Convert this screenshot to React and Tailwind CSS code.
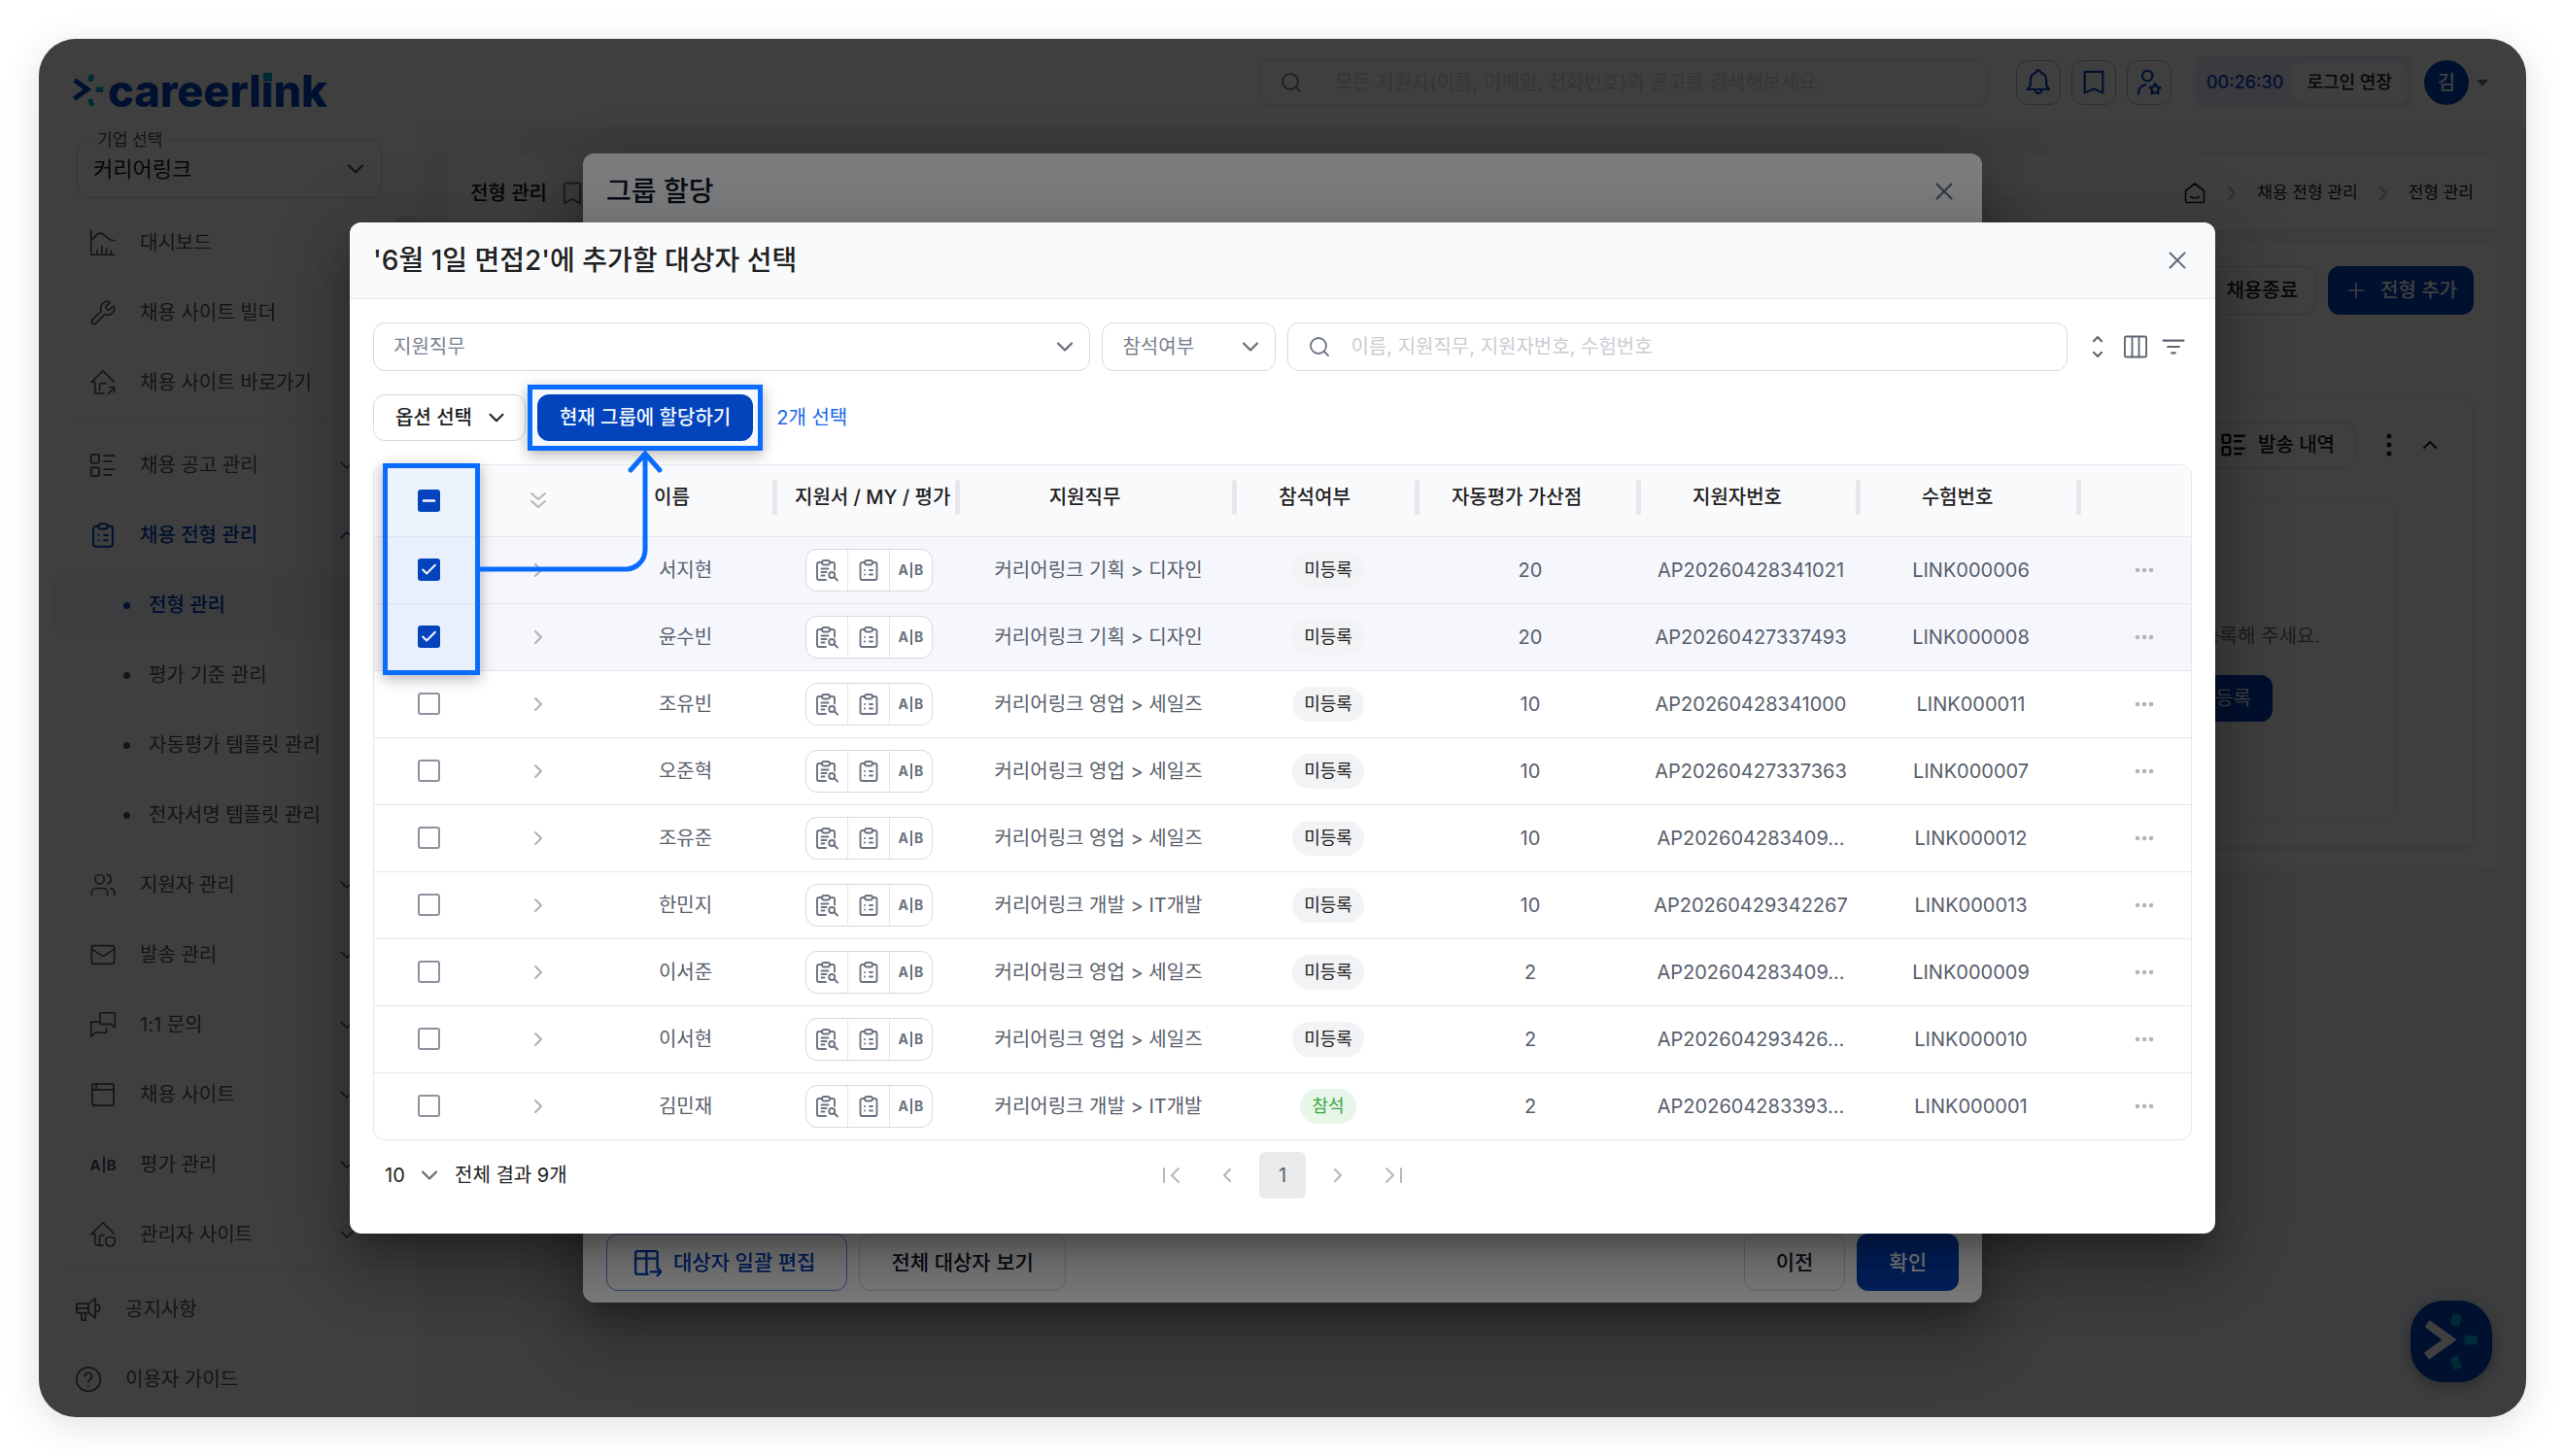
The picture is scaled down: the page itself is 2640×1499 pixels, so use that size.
import { useState } from "react";
import { Bookmark, ChevronDown, ChevronRight, ChevronUp, ChevronLeft, Mail, Minus, Check, Plus, Search, Users, Wrench, X } from "lucide-react";
import clsx from "clsx";

const applicants = [
  { id: 1, name: "서지현", job: "커리어링크 기획 > 디자인", attend: "미등록", score: 20, no: "AP20260428341021", exam: "LINK000006" },
  { id: 2, name: "윤수빈", job: "커리어링크 기획 > 디자인", attend: "미등록", score: 20, no: "AP20260427337493", exam: "LINK000008" },
  { id: 3, name: "조유빈", job: "커리어링크 영업 > 세일즈", attend: "미등록", score: 10, no: "AP20260428341000", exam: "LINK000011" },
  { id: 4, name: "오준혁", job: "커리어링크 영업 > 세일즈", attend: "미등록", score: 10, no: "AP20260427337363", exam: "LINK000007" },
  { id: 5, name: "조유준", job: "커리어링크 영업 > 세일즈", attend: "미등록", score: 10, no: "AP202604283409...", exam: "LINK000012" },
  { id: 6, name: "한민지", job: "커리어링크 개발 > IT개발", attend: "미등록", score: 10, no: "AP20260429342267", exam: "LINK000013" },
  { id: 7, name: "이서준", job: "커리어링크 영업 > 세일즈", attend: "미등록", score: 2, no: "AP202604283409...", exam: "LINK000009" },
  { id: 8, name: "이서현", job: "커리어링크 영업 > 세일즈", attend: "미등록", score: 2, no: "AP202604293426...", exam: "LINK000010" },
  { id: 9, name: "김민재", job: "커리어링크 개발 > IT개발", attend: "참석", score: 2, no: "AP202604283393...", exam: "LINK000001" },
];

const headers = ["이름", "지원서 / MY / 평가", "지원직무", "참석여부", "자동평가 가산점", "지원자번호", "수험번호"];

// small stroke icon on a 24px grid
const Icon = ({ size = 28, width = 1.6, className, children }) => (
  <svg
    width={size}
    height={size}
    viewBox="0 0 24 24"
    fill="none"
    stroke="currentColor"
    strokeWidth={width}
    strokeLinecap="round"
    strokeLinejoin="round"
    className={clsx("shrink-0", className)}
    aria-hidden="true"
  >
    {children}
  </svg>
);

const DashboardIcon = () => (
  <Icon width={1.4}>
    <path d="M1.5 1v21.500h20.500M2 9c3 0 3-5.500 7.500-5.500S15 10 22 10M7 22v-4M11 22v-7M15 22v-5M19 22v-3" />
  </Icon>
);
const HomeLinkIcon = () => (
  <Icon width={1.4}>
    <path d="M5 21.500V11.500H1.800L12 1.500l9.500 9.500M5 18.500c0 2 1 3 3 3h5M9 19v-4.500c0-1 .5-2 2-2h3.500M16.500 22l5.500-5.500M17.500 16h4.500v4.500" />
  </Icon>
);
const HomeShieldIcon = () => (
  <Icon width={1.4}>
    <path d="M5 18V11.500H1.800L12 1.500l9.500 9.500M5 18.500c0 2 1 3 3 3h4M9 21v-6.500c0-1 .5-2 2-2h2M18.500 14l4 1.500v3c0 2-2 3.500-4 4.300-2-.8-4-2.300-4-4.300v-3z" />
  </Icon>
);
const ListIcon = ({ size = 28, width = 1.6 }) => (
  <Icon size={size} width={width}>
    <rect x="1.500" y="2.500" width="7" height="7.500" rx="1" />
    <rect x="1.500" y="14" width="7" height="7.500" rx="1" />
    <path d="M13 3.500h9M13 8.500h6M13 15.500h9M13 20.500h6" />
  </Icon>
);
const ClipboardIcon = ({ size = 28, width = 1.7 }) => (
  <Icon size={size} width={width}>
    <path d="M8 4H5.500a2 2 0 0 0-2 2v14a2 2 0 0 0 2 2h13a2 2 0 0 0 2-2V6a2 2 0 0 0-2-2H16" />
    <rect x="8" y="2" width="8" height="4.500" rx="2.200" />
    <path d="M8 12h.1M8 16.500h.1M13 12h3M13 16.500h3" />
  </Icon>
);
const ClipboardSearchIcon = () => (
  <Icon size={24} width={1.9}>
    <path d="M6.500 4H4a2 2 0 0 0-2 2v14a2 2 0 0 0 2 2h7M15.500 4H18a2 2 0 0 1 2 2v5.500" />
    <rect x="7" y="2" width="8" height="4.500" rx="2.200" />
    <path d="M6.500 10.500h7M6.500 14h5M6.500 17.500h3M20 19.500l3 3" />
    <circle cx="17.200" cy="17" r="3" />
  </Icon>
);
const ChatIcon = () => (
  <Icon width={1.4}>
    <path d="M9.500 1.500h13v13l-3.500-3H9.500zM9.500 9.500h-4.500l-3.500 0v13l4-3.500h9.500v-4" />
  </Icon>
);
const WindowIcon = () => (
  <Icon width={1.5}>
    <rect x="2.500" y="2.500" width="19" height="19" rx="2" />
    <path d="M2.500 7.500h19M6 2.500v4.500" />
  </Icon>
);
const MegaphoneIcon = () => (
  <Icon width={1.5}>
    <path d="M3 7h9l6-4.500v17L12 15H3a1.500 1.500 0 0 1-1.500-1.500v-5A1.500 1.500 0 0 1 3 7zM12 7v8M6 15v6.500h3.500V15M18 8h2c1 0 2 1 2 3s-1 3-2 3h-2M1.500 11H12" />
  </Icon>
);
const HelpIcon = () => (
  <Icon width={1.5}>
    <circle cx="12" cy="12" r="10.500" />
    <path d="M9 9.300a3 3 0 1 1 4.400 2.700c-1 .6-1.400 1-1.400 2.200M12 17.800v.1" />
  </Icon>
);
const SplitIcon = ({ big }) => (
  <span className={clsx("flex items-center justify-center gap-0.5 font-bold leading-none", big ? "w-7 text-[15px]" : "text-[14px]")}>
    A
    <i className="h-4 w-0.5 bg-current" />B
  </span>
);

const Spark = ({ arrow, className }) => (
  <svg viewBox="15 11 56 62" className={className} aria-hidden="true">
    <path d="M20.700 20.300L48.700 40.300 20 60.700 15 53.700 33.300 40.300 15.700 27z" fill={arrow} />
    <path d="M45.300 12.700l9 3-4 11.300-9-3zM56.300 36h13.400v9.300H56.300zM49.700 56.300l4.300 12.400-8 2.600-4.300-12.300z" fill="#00a8d8" />
  </svg>
);

const CheckBox = ({ checked, mixed, onChange, label }) => (
  <label className="grid place-items-center">
    <input
      type="checkbox"
      aria-label={label}
      checked={checked}
      onChange={onChange}
      className={clsx(
        "col-start-1 row-start-1 size-[23px] appearance-none rounded-[3px]",
        checked || mixed ? "bg-[#0342ba]" : "border-2 border-[#8d929e] bg-white"
      )}
    />
    {mixed && <Minus size={19} strokeWidth={3} className="pointer-events-none col-start-1 row-start-1 text-white" />}
    {checked && !mixed && <Check size={19} strokeWidth={2.5} className="pointer-events-none col-start-1 row-start-1 text-white" />}
  </label>
);

const NavItem = ({ icon, text, open, active }) => (
  <li>
    <a href="#" className={clsx("flex h-[66px] items-center gap-6 pr-[47px] pl-[38px]", active && "font-medium text-[#0042bc]")}>
      {icon}
      <span className="flex-1">{text}</span>
      {open !== undefined && (open ? <ChevronUp size={24} strokeWidth={1.5} /> : <ChevronDown size={24} strokeWidth={1.5} />)}
    </a>
  </li>
);

const SubItem = ({ text, active }) => (
  <li>
    <a
      href="#"
      className={clsx("flex h-[66px] items-center gap-[19px] rounded-xl pl-[73px]", active && "bg-[#f0f5fc] font-medium text-[#0042bc]")}
    >
      <i className="size-[7px] rounded-full bg-current" />
      {text}
    </a>
  </li>
);

const Header = () => (
  <header className="flex h-[90px] items-center bg-white pr-[39px] pl-[35px]">
    <a href="#" className="flex items-center gap-1 pt-4 text-[45px] leading-none font-extrabold text-[#0041bc]">
      <Spark arrow="#0041bc" className="h-9 w-8" />
      <span className="font-['Inter']">
        careerl
        <span className="relative">
          i<i className="absolute top-[9px] left-[2px] h-[9px] w-[9px] bg-[#00a8d8]" />
        </span>
        nk
      </span>
    </a>
    <label className="mr-[29px] ml-auto flex h-12 w-[750px] items-center gap-[33px] rounded-xl border border-gray-300 pl-5 text-gray-500">
      <Search size={24} strokeWidth={1.7} />
      <input
        aria-label="통합 검색"
        placeholder="모든 지원자(이름, 이메일, 전화번호)와 공고를 검색해보세요."
        className="flex-1 text-xl outline-none placeholder:text-gray-300"
      />
    </label>
    <div className="flex gap-[11px] text-[#0042bc]">
      <button aria-label="알림" className="grid size-[46px] place-items-center rounded-xl border border-[#9db8ea]">
        <Icon size={28} width={1.9}>
          <path d="M2.500 18h19l-2.500-3.500V10c0-3.500-2-6-5-6.800a2 2 0 0 0-4 0c-3 .8-5 3.300-5 6.800v4.500L2.500 18zM9 18.500a3 3 0 0 0 6 0" />
        </Icon>
      </button>
      <button aria-label="북마크" className="grid size-[46px] place-items-center rounded-xl border border-[#9db8ea]">
        <Icon size={28} width={1.9}>
          <path d="M4 2.500h16v18.500l-8-3.500-8 3.500z" />
        </Icon>
      </button>
      <button aria-label="관심 인재" className="grid size-[46px] place-items-center rounded-xl border border-[#9db8ea]">
        <Icon size={28} width={1.9}>
          <circle cx="10.500" cy="6" r="4.500" />
          <path d="M2.500 22c0-5 2-7.500 6.500-8M17.200 13l1.600 2.800 3.100.6-2.200 2.300.4 3.100-2.900-1.300-2.900 1.300.4-3.100-2.200-2.300 3.100-.6z" />
        </Icon>
      </button>
    </div>
    <div className="ml-6 flex h-[54px] items-center gap-2 rounded-xl bg-[#e9edfb] pr-[5px] pl-3 text-lg">
      <span className="font-medium text-[#0042bc]">00:26:30</span>
      <button className="h-[42px] rounded-xl bg-white px-4 font-medium">로그인 연장</button>
    </div>
    <button className="ml-3 flex items-center gap-2" aria-label="계정 메뉴">
      <span className="grid size-[46px] place-items-center rounded-full bg-[#0042bc] text-xl font-medium text-white">김</span>
      <svg width="12" height="7" viewBox="0 0 12 7" fill="#6b7280" aria-hidden="true">
        <path d="M0 0h12L6 7z" />
      </svg>
    </button>
  </header>
);

const Sidebar = () => (
  <aside className="relative flex w-[390px] shrink-0 flex-col bg-white text-xl text-gray-600">
    <fieldset className="relative mx-[37px] mt-[2px] mb-[13px] ml-[39px] rounded-xl border border-gray-300 px-3 pb-[11px]">
      <legend className="px-2 text-[17px] leading-6">기업 선택</legend>
      <select aria-label="기업 선택" className="h-9 w-full appearance-none px-1 text-[22px] leading-9 text-gray-900">
        <option>커리어링크</option>
      </select>
      <ChevronDown size={28} strokeWidth={2} className="pointer-events-none absolute top-1 right-3 text-gray-600" />
    </fieldset>
    <nav className="flex-1 px-[14px]">
      <ul className="flex flex-col gap-[6px]">
        <NavItem icon={<DashboardIcon />} text="대시보드" />
        <NavItem icon={<Wrench size={28} strokeWidth={1.4} />} text="채용 사이트 빌더" />
        <NavItem icon={<HomeLinkIcon />} text="채용 사이트 바로가기" />
        <li className="mx-6 mb-[6px] h-px bg-gray-200" />
        <NavItem icon={<ListIcon />} text="채용 공고 관리" open={false} />
        <NavItem icon={<ClipboardIcon />} text="채용 전형 관리" open active />
        <SubItem text="전형 관리" active />
        <SubItem text="평가 기준 관리" />
        <SubItem text="자동평가 템플릿 관리" />
        <SubItem text="전자서명 템플릿 관리" />
        <NavItem icon={<Users size={28} strokeWidth={1.4} />} text="지원자 관리" open={false} />
        <NavItem icon={<Mail size={28} strokeWidth={1.4} />} text="발송 관리" open={false} />
        <NavItem icon={<ChatIcon />} text="1:1 문의" open={false} />
        <NavItem icon={<WindowIcon />} text="채용 사이트" open={false} />
        <NavItem icon={<SplitIcon big />} text="평가 관리" open={false} />
        <NavItem icon={<HomeShieldIcon />} text="관리자 사이트" open={false} />
      </ul>
    </nav>
    <div className="mx-6 flex flex-col gap-[6px] border-t border-gray-200 pt-[10px] pb-[6px]">
      <a href="#" className="flex h-[66px] items-center gap-6 pl-[13px]">
        <MegaphoneIcon />
        공지사항
      </a>
      <a href="#" className="flex h-[66px] items-center gap-6 pl-[13px]">
        <HelpIcon />
        이용자 가이드
      </a>
    </div>
    <button aria-label="메뉴 접기" className="absolute top-[92px] -right-[10px] size-10 rounded-full bg-gray-200" />
  </aside>
);

const StagePage = () => (
  <main className="flex flex-1 flex-col gap-3 bg-[#f2f5fb] px-[30px] pt-[30px]">
    <div className="flex h-[78px] items-center rounded-xl bg-white px-6 shadow-sm">
      <h1 className="text-xl font-medium">전형 관리</h1>
      <Bookmark size={28} strokeWidth={1.7} className="ml-3 text-gray-500" />
      <div className="ml-auto flex items-center gap-[14px] text-[17px]">
        <Icon size={24}>
          <path d="M2.500 9.500L12 2l9.500 7.500V20a1.500 1.500 0 0 1-1.500 1.500H4A1.500 1.500 0 0 1 2.500 20zM7.500 15.500c2.500 1.700 6.500 1.700 9 0" />
        </Icon>
        <ChevronRight size={24} strokeWidth={1.5} className="text-gray-400" />
        <a href="#">채용 전형 관리</a>
        <ChevronRight size={24} strokeWidth={1.5} className="text-gray-400" />
        <span>전형 관리</span>
      </div>
    </div>
    <section className="rounded-xl bg-white p-6 shadow-sm">
      <div className="flex justify-end gap-3 text-xl">
        <button className="h-[50px] rounded-xl border border-gray-300 px-[18px] font-medium">채용종료</button>
        <button className="flex h-[50px] items-center gap-[13px] rounded-xl bg-[#0042bc] px-[17px] font-medium text-white">
          <Plus size={24} strokeWidth={1.7} />
          전형 추가
        </button>
      </div>
      <div className="mt-[85px] rounded-xl border border-gray-200 pt-6 pb-[28px] shadow-sm">
        <div className="flex items-center justify-end pr-8">
          <button className="flex h-12 items-center gap-3 rounded-xl border border-gray-300 px-[21px] text-xl font-medium">
            <ListIcon size={26} width={2.2} />
            발송 내역
          </button>
          <button aria-label="더보기" className="ml-[22px]">
            <Icon size={24} width={5}>
              <path d="M12 3v.1M12 12v.1M12 21v.1" />
            </Icon>
          </button>
          <button aria-label="접기" className="ml-[18px]">
            <ChevronUp size={24} strokeWidth={2} />
          </button>
        </div>
        <div className="mt-[31px] mr-[79px] ml-20 flex flex-col items-end rounded-xl border border-gray-200 pt-[125px] pb-[100px] text-xl">
          <p className="mr-[77px] leading-8 text-gray-500">등록해 주세요.</p>
          <button className="mt-6 mr-[126px] h-12 rounded-xl bg-[#0042bc] px-[22px] text-white">등록</button>
        </div>
      </div>
    </section>
  </main>
);

const dialogShadow = "shadow-[0_18px_26px_-10px_rgba(0,0,0,0.25),0_38px_64px_5px_rgba(0,0,0,0.18),0_14px_76px_14px_rgba(0,0,0,0.14)]";

const GroupDialog = () => (
  <div className="absolute inset-0 flex items-center justify-center bg-black/50">
    <div role="dialog" className={clsx("flex w-9/16 flex-col overflow-hidden rounded-xl bg-white", dialogShadow)}>
      <div className="flex h-[78px] items-center justify-between bg-[#f9fafc] px-6">
        <h2 className="text-[28px] font-medium text-gray-900">그룹 할당</h2>
        <button aria-label="닫기">
          <X size={30} strokeWidth={1.7} className="text-gray-500" />
        </button>
      </div>
      <div className="h-[1034px]" />
      <div className="flex gap-3 px-6 pb-3 text-[21px]">
        <button className="flex h-[59px] items-center gap-3 rounded-xl border border-[#5b8be0] pr-8 pl-[26px] font-medium text-[#0042bc]">
          <Icon size={30} width={1.9}>
            <path d="M12.500 21.500H4A1.500 1.500 0 0 1 2.500 20V4A1.500 1.500 0 0 1 4 2.500h15A1.500 1.500 0 0 1 20.500 4v11.500M2.500 8.500h18M11.500 2.500v19M15 19.500h8M20.500 16.500l3 3-3 3" />
          </Icon>
          대상자 일괄 편집
        </button>
        <button className="h-[59px] rounded-xl border border-gray-300 px-8 font-medium text-gray-900">전체 대상자 보기</button>
        <button className="ml-auto h-[59px] rounded-xl border border-gray-300 px-8 font-medium text-gray-900">이전</button>
        <button className="h-[59px] rounded-xl bg-[#0042bc] px-[33px] font-medium text-white">확인</button>
      </div>
    </div>
  </div>
);

const SelectBox = ({ label }) => (
  <div className="relative">
    <select
      aria-label={label}
      className="h-[50px] w-full appearance-none rounded-xl border border-[#d5d8dd] bg-white px-5 text-xl text-[#7a818e]"
    >
      <option>{label}</option>
    </select>
    <ChevronDown size={28} strokeWidth={2} className="pointer-events-none absolute top-[11px] right-3 text-[#6b6f76]" />
  </div>
);

const ApplicantDialog = () => {
  const [selected, setSelected] = useState([1, 2]);

  const toggle = (id) => {
    if (selected.includes(id)) return setSelected(selected.filter((s) => s !== id));
    setSelected([...selected, id]);
  };

  const toggleAll = () => {
    setSelected(selected.length === applicants.length ? [] : applicants.map((a) => a.id));
  };

  return (
    <div className="absolute inset-0 flex items-center justify-center bg-black/50">
      <div role="dialog" className={clsx("w-3/4 rounded-xl bg-white pb-9", dialogShadow)}>
        <div className="flex h-[79px] items-center justify-between rounded-t-xl border-b border-gray-200 bg-[#f9fafc] px-6">
          <h2 className="text-[28px] font-medium text-[#212121]">'6월 1일 면접2'에 추가할 대상자 선택</h2>
          <button aria-label="닫기">
            <X size={30} strokeWidth={1.7} className="text-[#69717e]" />
          </button>
        </div>

        <div className="px-6 pt-6">
          <div className="grid grid-cols-[738fr_179px_802fr_auto] gap-3">
            <SelectBox label="지원직무" />
            <SelectBox label="참석여부" />
            <label className="flex h-[50px] items-center gap-5 rounded-xl border border-[#d5d8dd] pl-5 text-[#6b7280]">
              <Search size={24} strokeWidth={1.8} />
              <input
                aria-label="대상자 검색"
                placeholder="이름, 지원직무, 지원자번호, 수험번호"
                className="flex-1 text-xl outline-none placeholder:text-[#c9ccd2]"
              />
            </label>
            <div className="flex items-center gap-[11px] pr-[5px] pl-[5px] text-[#5f6672]">
              <button aria-label="정렬">
                <Icon size={28} width={1.8}>
                  <path d="M8.500 7L12 3.500 15.500 7M8.500 17l3.500 3.500 3.500-3.500" />
                </Icon>
              </button>
              <button aria-label="열 설정">
                <Icon size={28} width={1.6}>
                  <rect x="2.500" y="3" width="19" height="18" rx="1" />
                  <path d="M9 3v18M15 3v18" />
                </Icon>
              </button>
              <button aria-label="필터">
                <Icon size={28} width={1.8}>
                  <path d="M3 6.500h18M7 12h10M10.500 17.500h3" />
                </Icon>
              </button>
            </div>
          </div>

          <div className="mt-6 flex items-center gap-3 text-xl">
            <button className="flex h-12 items-center gap-3 rounded-xl border border-[#d5d8dd] pr-4 pl-[22px] font-medium text-[#212121]">
              옵션 선택
              <ChevronDown size={26} strokeWidth={1.8} />
            </button>
            <div className="relative">
              <button className="h-12 rounded-xl bg-[#0342ba] px-[23px] font-medium text-white">현재 그룹에 할당하기</button>
              <i className="pointer-events-none absolute -inset-[10px] border-5 border-[#0a6cff] bg-[#0a6cff]/5 shadow-[0_4px_14px_rgba(0,0,0,0.3)]" />
            </div>
            <span className="ml-3 text-[#1a66e8]">2개 선택</span>
          </div>

          <div className="relative mt-6">
            <div className="overflow-hidden rounded-xl border border-gray-200">
              <table className="w-full table-fixed text-center text-xl text-[#58606c]">
                <colgroup>
                  <col className="w-[112px]" />
                  <col className="w-[114px]" />
                  <col className="w-[189px]" />
                  <col className="w-[188px]" />
                  <col className="w-[285px]" />
                  <col className="w-[188px]" />
                  <col className="w-[228px]" />
                  <col className="w-[226px]" />
                  <col className="w-[227px]" />
                  <col className="w-[113px]" />
                </colgroup>
                <thead>
                  <tr className="h-[73px] border-b border-gray-200 bg-[#f9fafc] text-[#212121]">
                    <th>
                      <CheckBox
                        label="전체 선택"
                        checked={selected.length === applicants.length}
                        mixed={selected.length > 0 && selected.length < applicants.length}
                        onChange={toggleAll}
                      />
                    </th>
                    <th>
                      <button aria-label="모두 펼치기" className="mx-auto block text-[#b5b5b5]">
                        <Icon size={24} width={1.9}>
                          <path d="M5 5l7 6 7-6M5 13l7 6 7-6" />
                        </Icon>
                      </button>
                    </th>
                    {headers.map((h) => (
                      <th key={h} className="pb-[6px] font-medium">
                        <div className="flex h-9 items-center">
                          <span className="min-w-0 flex-1 pr-[41px] pl-[18px] whitespace-nowrap">{h}</span>
                          <i className="h-9 w-[5px] shrink-0 rounded-sm bg-gray-200" />
                        </div>
                      </th>
                    ))}
                    <th />
                  </tr>
                </thead>
                <tbody>
                  {applicants.map((a) => (
                    <tr
                      key={a.id}
                      className={clsx("h-[69px] border-b border-gray-200 last:border-0", selected.includes(a.id) && "bg-[#f5f7fd]")}
                    >
                      <td>
                        <CheckBox label={a.name} checked={selected.includes(a.id)} onChange={() => toggle(a.id)} />
                      </td>
                      <td>
                        <button aria-label="펼치기" className="mx-auto block text-[#b0b0b0]">
                          <ChevronRight size={24} strokeWidth={2} />
                        </button>
                      </td>
                      <td>{a.name}</td>
                      <td>
                        <div className="mx-auto flex h-11 w-[131px] divide-x divide-gray-200 overflow-hidden rounded-xl border border-[#d5d8dd] bg-white text-[#6b7280]">
                          <button aria-label="지원서" className="grid flex-1 place-items-center">
                            <ClipboardSearchIcon />
                          </button>
                          <button aria-label="MY" className="grid flex-1 place-items-center">
                            <ClipboardIcon size={24} width={1.9} />
                          </button>
                          <button aria-label="평가" className="grid flex-1 place-items-center">
                            <SplitIcon />
                          </button>
                        </div>
                      </td>
                      <td>{a.job}</td>
                      <td>
                        <span
                          className={clsx(
                            "inline-flex h-9 items-center rounded-full px-3 align-middle text-lg",
                            a.attend === "참석" ? "bg-[#e8f5e9] text-[#36a53f]" : "bg-[#f2f3f5] text-[#212121]"
                          )}
                        >
                          {a.attend}
                        </span>
                      </td>
                      <td>{a.score}</td>
                      <td>{a.no}</td>
                      <td>{a.exam}</td>
                      <td className="pl-4">
                        <button aria-label="더보기" className="mx-auto block text-[#b5b5b5]">
                          <Icon size={24} width={4.5}>
                            <path d="M5 12h.1M12 12h.1M19 12h.1" />
                          </Icon>
                        </button>
                      </td>
                    </tr>
                  ))}
                </tbody>
              </table>
            </div>
            {/* guide marks over the check boxes and the assign button */}
            <i className="pointer-events-none absolute -top-px left-[10px] h-[218px] w-[100px] border-5 border-[#0a6cff] bg-[#0a6cff]/5 shadow-[0_4px_14px_rgba(0,0,0,0.3)]" />
            <svg
              width="200"
              height="130"
              viewBox="0 0 200 130"
              fill="none"
              stroke="#0a6cff"
              strokeWidth="5"
              strokeLinecap="round"
              className="pointer-events-none absolute -top-[14px] left-[108px]"
              aria-hidden="true"
            >
              <path d="M2 122h150a20 20 0 0 0 20-20V4M157 20L172 3l15 17" />
            </svg>
          </div>

          <div className="mt-3 grid grid-cols-[1fr_auto_1fr] items-center text-xl">
            <div className="flex items-center text-[#212121]">
              <div className="relative">
                <select aria-label="페이지당 개수" className="h-12 w-[72px] appearance-none pl-3">
                  <option>10</option>
                </select>
                <ChevronDown size={28} strokeWidth={2} className="pointer-events-none absolute top-[10px] right-0 text-[#6b6f76]" />
              </div>
              <span className="ml-3">전체 결과 9개</span>
            </div>
            <div className="flex gap-[9px] text-[#b5b5b5]">
              <button aria-label="처음" className="grid size-12 place-items-center">
                <Icon size={24} width={1.9}>
                  <path d="M4 5v14M19 5l-7 7 7 7" />
                </Icon>
              </button>
              <button aria-label="이전" className="grid size-12 place-items-center">
                <ChevronLeft size={24} strokeWidth={2} />
              </button>
              <button className="size-12 rounded-md bg-[#ebebeb] text-[#58606c]">1</button>
              <button aria-label="다음" className="grid size-12 place-items-center">
                <ChevronRight size={24} strokeWidth={2} />
              </button>
              <button aria-label="마지막" className="grid size-12 place-items-center">
                <Icon size={24} width={1.9}>
                  <path d="M20 5v14M5 5l7 7-7 7" />
                </Icon>
              </button>
            </div>
          </div>
        </div>
      </div>
    </div>
  );
};

const App = () => {
  return (
    <div className="flex min-h-screen bg-white p-10 font-['Inter','Noto_Sans_CJK_KR',sans-serif] text-gray-900">
      <div className="relative flex flex-1 flex-col overflow-hidden rounded-[38px] shadow-[0_8px_40px_rgba(0,0,0,0.12)]">
        <Header />
        <div className="flex flex-1">
          <Sidebar />
          <StagePage />
        </div>
        <button
          aria-label="상담"
          className="absolute right-[35px] bottom-9 grid size-[84px] place-items-center rounded-[34px] bg-[#0041bc] shadow-[0_4px_16px_rgba(0,0,0,0.3)]"
        >
          <Spark arrow="#ffffff" className="h-[62px] w-14" />
        </button>
        <GroupDialog />
        <ApplicantDialog />
      </div>
    </div>
  );
};

export default App;
